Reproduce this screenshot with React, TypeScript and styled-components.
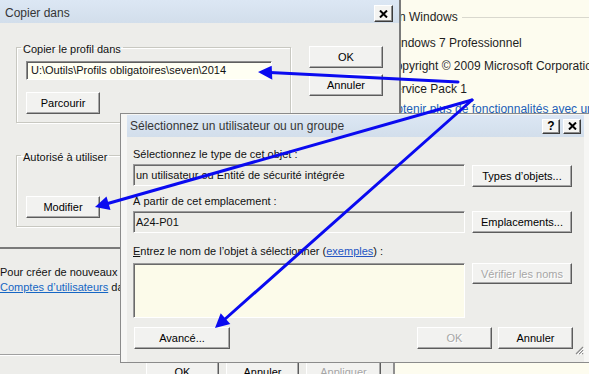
import styled, { createGlobalStyle } from "styled-components";

const ui = `"Liberation Sans", Arial, sans-serif`;

const GlobalStyle = createGlobalStyle`
  html, body {
    margin: 0;
    padding: 0;
    background: #ededea;
  }
  body {
    width: 589px;
    height: 374px;
    overflow: hidden;
    font-family: ${ui};
  }
  * {
    box-sizing: border-box;
  }
`;

const Desktop = styled.div`
  position: relative;
  width: 589px;
  height: 374px;
  overflow: hidden;
  background: #ededea;
  font-family: ${ui};
  font-size: 11px;
  color: #111;
`;

/* ---- window behind everything: "Système" panel ---- */
const SystemWindow = styled.div`
  position: absolute;
  left: 360px;
  top: 0;
  right: 0;
  bottom: 0;
  background: #fdfcef;
  padding: 10px 0 0 9px;
  font-size: 12px;
  line-height: 15px;
  color: #1e1e1e;
  white-space: nowrap;
`;

const SectionHead = styled.div`
  display: flex;
  align-items: center;
  gap: 4px;
  &::after {
    content: "";
    flex: 1;
    border-top: 1px solid #d9d8ce;
  }
`;

const InfoList = styled.div`
  display: flex;
  flex-direction: column;
  gap: 8px;
  padding: 11px 0 0 18px;
`;

const UpgradeLink = styled.div`
  margin-top: -3px;
  color: #1c5fb8;
`;

/* ---- "Profils des utilisateurs" window ---- */
const PropsWindow = styled.div`
  position: absolute;
  left: 0;
  top: 0;
  width: 395px;
  height: 400px;
  background: #ededea;
  border-right: 2px solid #8f8f8f;
  display: flex;
  flex-direction: column;
`;

const PropsNote = styled.p`
  margin: 265px 0 0;
  line-height: 15px;
  white-space: nowrap;
`;

const BlueLink = styled.a`
  color: #1566c4;
  text-decoration: underline;
`;

const Etched = styled.div`
  margin-top: 59px;
  border-top: 1px solid #a0a0a0;
  border-bottom: 1px solid #fff;
`;

const ButtonRow = styled.div`
  display: flex;
  justify-content: flex-end;
  gap: 7px;
  padding: 5px 12px 0 0;
`;

/* ---- shared bits ---- */
const Button = styled.button<{ $w: number; $h?: number }>`
  width: ${(p) => p.$w}px;
  height: ${(p) => p.$h ?? 22}px;
  padding: 0;
  margin: 0;
  font: 11px ${ui};
  color: #000;
  background: #f2f2f0;
  border: 1px solid;
  border-color: #fff #5c5c5c #5c5c5c #fff;
  box-shadow: inset -1px -1px 0 #a8a8a8;
  flex-shrink: 0;
  &:disabled {
    color: #a6a6a6;
    text-shadow: 1px 1px 0 #fff;
  }
`;

const TitleBar = styled.div<{ $h: number }>`
  height: ${(p) => p.$h}px;
  flex-shrink: 0;
  display: flex;
  justify-content: space-between;
  background: linear-gradient(#dce7f4, #d2deeb);
  font-size: 12px;
  color: #353535;
  white-space: nowrap;
`;

const CaptionButtons = styled.div`
  display: flex;
  align-items: center;
  gap: 3px;
`;

const CaptionButton = styled.span<{ $w: number; $h: number }>`
  display: inline-flex;
  align-items: center;
  justify-content: center;
  width: ${(p) => p.$w}px;
  height: ${(p) => p.$h}px;
  background: #f4f4f2;
  border: 1px solid;
  border-color: #fff #3c3c3c #3c3c3c #fff;
  box-shadow: inset -1px -1px 0 #8c8c8c;
  font: bold 12px ${ui};
  color: #000;
  line-height: 1;
`;

const CloseGlyph = () => (
  <svg width="9" height="8" viewBox="0 0 9 8">
    <path d="M1 0.5 L8 7.5 M8 0.5 L1 7.5" stroke="#000" strokeWidth="2" fill="none" />
  </svg>
);

/* ---- "Copier dans" dialog ---- */
const CopyDialog = styled.div`
  position: absolute;
  left: 0;
  top: 0;
  width: 401px;
  height: 249px;
  background: #ededea;
  border-right: 2px solid #7a7a7a;
  border-bottom: 2px solid #7a7a7a;
  display: flex;
  flex-direction: column;
`;

const CopyTitle = styled(TitleBar)`
  align-items: flex-start;
  padding: 5px 6px 0 5px;
  span.caption {
    padding-top: 1px;
  }
`;

const CopyBody = styled.div`
  display: flex;
  gap: 18px;
  padding: 16px 0 0 16px;
`;

const GroupColumn = styled.div`
  display: flex;
  flex-direction: column;
  gap: 24px;
`;

const Group = styled.fieldset<{ $lead: number }>`
  width: 275px;
  margin: 0;
  padding: ${(p) => p.$lead}px 0 8px 9px;
  border: 1px solid #c8c8c1;
  box-shadow: inset 1px 1px 0 #fff, 1px 1px 0 #fff;
  display: flex;
  flex-direction: column;
  align-items: flex-start;
  gap: 12px;
`;

const Legend = styled.legend`
  margin-left: -5px;
  padding: 4px 2px 0;
  line-height: 13px;
  font-size: 11px;
`;

const PathInput = styled.div`
  width: 246px;
  height: 19px;
  padding-left: 4px;
  line-height: 17px;
  background: #fffff3;
  border: 1px solid;
  border-color: #8d8d8d #fff #fff #8d8d8d;
  box-shadow: inset 1px 1px 0 #5f5f5f;
  white-space: nowrap;
  overflow: hidden;
`;

const SideButtons = styled.div`
  display: flex;
  flex-direction: column;
  gap: 6px;
  padding-top: 7px;
`;

/* ---- "Sélectionnez un utilisateur ou un groupe" dialog ---- */
const SelectDialog = styled.div`
  position: absolute;
  left: 120px;
  top: 113px;
  width: 470px;
  height: 250px;
  background: #f6f6f4;
  border: 1px solid #8b8b8b;
  border-right: 0;
  padding: 1px 6px 0;
  display: flex;
  flex-direction: column;
`;

const SelectTitle = styled(TitleBar)`
  align-items: center;
  padding: 0 3px;
`;

const SelectBody = styled.div`
  position: relative;
  flex: 1;
  background: #ededea;
  padding: 11px 0 0 6px;
  display: grid;
  grid-template-columns: 332px 100px;
  column-gap: 7px;
  align-items: start;
  align-content: start;
`;

const FieldLabel = styled.div<{ $gap: number }>`
  grid-column: 1 / -1;
  margin-top: ${(p) => p.$gap}px;
  line-height: 13px;
  white-space: nowrap;
`;

const ReadField = styled.div`
  margin-top: 3px;
  height: 22px;
  padding-left: 2px;
  line-height: 20px;
  background: #ecece8;
  border: 1px solid;
  border-color: #9a9a9a #fff #fff #9a9a9a;
  box-shadow: inset 1px 1px 0 #6a6a6a;
  white-space: nowrap;
  overflow: hidden;
`;

const NameBox = styled.div`
  margin-top: 5px;
  height: 55px;
  background: #fcfbea;
  border: 1px solid;
  border-color: #9a9a9a #fff #fff #9a9a9a;
  box-shadow: inset 1px 1px 0 #6a6a6a;
`;

const RowButton = styled(Button)<{ $top: number }>`
  margin-top: ${(p) => p.$top}px;
`;

const ExampleLink = styled.span`
  color: #2455c3;
`;

const FooterRow = styled.div`
  grid-column: 1 / -1;
  margin-top: 9px;
  width: 440px;
  display: flex;
  gap: 6px;
  padding-left: 1px;
  & > :first-child {
    margin-right: auto;
  }
`;

const Grip = styled.svg`
  position: absolute;
  right: 0;
  bottom: 7px;
`;

const Arrows = styled.svg`
  position: absolute;
  inset: 0;
  pointer-events: none;
`;

const arrowBlue = "#0a0af0";

const App = () => (
  <Desktop>
    <GlobalStyle />

    <SystemWindow>
      <SectionHead>Édition Windows</SectionHead>
      <InfoList>
        <div>Windows 7 Professionnel</div>
        <div>Copyright © 2009 Microsoft Corporation. Tous droits réservés.</div>
        <div>Service Pack 1</div>
        <UpgradeLink>Obtenir plus de fonctionnalités avec une nouvelle édition de Windows 7</UpgradeLink>
      </InfoList>
    </SystemWindow>

    <PropsWindow>
      <PropsNote>
        Pour créer de nouveaux comptes d’utilisateurs, ouvrez
        <br />
        <BlueLink>Comptes d’utilisateurs</BlueLink> dans le Panneau de configuration.
      </PropsNote>
      <Etched />
      <ButtonRow>
        <Button $w={73}>OK</Button>
        <Button $w={73}>Annuler</Button>
        <Button $w={75} disabled>
          Appliquer
        </Button>
      </ButtonRow>
    </PropsWindow>

    <CopyDialog>
      <CopyTitle $h={23}>
        <span className="caption">Copier dans</span>
        <CaptionButton $w={19} $h={17}>
          <CloseGlyph />
        </CaptionButton>
      </CopyTitle>
      <CopyBody>
        <GroupColumn>
          <Group $lead={5}>
            <Legend>Copier le profil dans</Legend>
            <PathInput>U:\Outils\Profils obligatoires\seven\2014</PathInput>
            <Button $w={74}>Parcourir</Button>
          </Group>
          <Group $lead={32}>
            <Legend>Autorisé à utiliser</Legend>
            <Button $w={74}>Modifier</Button>
          </Group>
        </GroupColumn>
        <SideButtons>
          <Button $w={74}>OK</Button>
          <Button $w={74}>Annuler</Button>
        </SideButtons>
      </CopyBody>
    </CopyDialog>

    <SelectDialog>
      <SelectTitle $h={22}>
        <span>Sélectionnez un utilisateur ou un groupe</span>
        <CaptionButtons>
          <CaptionButton $w={18} $h={15}>?</CaptionButton>
          <CaptionButton $w={18} $h={15}>
            <CloseGlyph />
          </CaptionButton>
        </CaptionButtons>
      </SelectTitle>
      <SelectBody>
        <FieldLabel $gap={0}>Sélectionnez le type de cet objet :</FieldLabel>
        <ReadField>un utilisateur ou Entité de sécurité intégrée</ReadField>
        <RowButton $w={100} $top={4}>
          Types d’objets...
        </RowButton>

        <FieldLabel $gap={8}>À partir de cet emplacement :</FieldLabel>
        <ReadField>A24-P01</ReadField>
        <RowButton $w={100} $top={3}>
          Emplacements...
        </RowButton>

        <FieldLabel $gap={12}>
          <u>E</u>ntrez le nom de l’objet à sélectionner (
          <ExampleLink>
            <u>exemples</u>
          </ExampleLink>
          ) :
        </FieldLabel>
        <NameBox />
        <RowButton $w={100} $h={21} $top={5} disabled>
          Vérifier les noms
        </RowButton>

        <FooterRow>
          <Button $w={96}>Avancé...</Button>
          <Button $w={75} disabled>
            OK
          </Button>
          <Button $w={75}>Annuler</Button>
        </FooterRow>

        <Grip width="9" height="9" viewBox="0 0 9 9">
          <path d="M8 1 L1 8 M8 4 L4 8 M8 7 L7 8" stroke="#8a8a8a" strokeWidth="1.2" />
          <path d="M9 2 L2 9 M9 5 L5 9" stroke="#fff" strokeWidth="1" />
        </Grip>
      </SelectBody>
    </SelectDialog>

    <Arrows width="589" height="374" viewBox="0 0 589 374">
      <g stroke={arrowBlue} strokeWidth="3" strokeLinecap="round">
        <line x1="458" y1="82" x2="270" y2="72.6" />
        <line x1="472" y1="100" x2="106" y2="204" />
        <line x1="472" y1="100" x2="224" y2="320" />
      </g>
      <g fill={arrowBlue}>
        <polygon points="258,72 271.7,65.7 272.3,79.7" />
        <polygon points="95,207 106.5,196.5 110.5,210" />
        <polygon points="215,328 220.7,313.3 230.3,324" />
      </g>
    </Arrows>
  </Desktop>
);

export default App;
